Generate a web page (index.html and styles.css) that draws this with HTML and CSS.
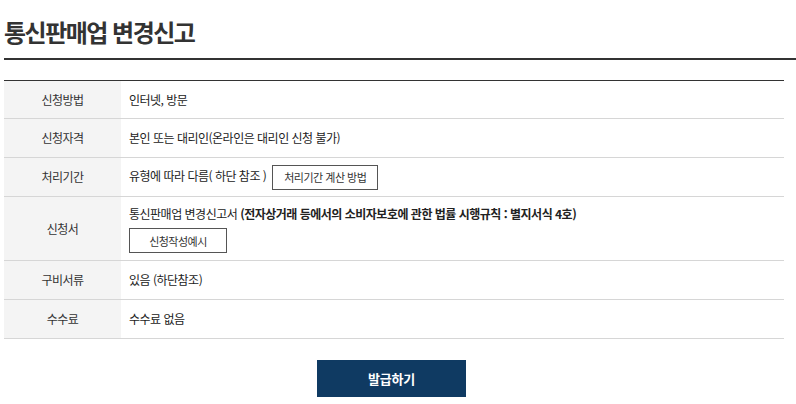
FILE: index.html
```html
<!DOCTYPE html>
<html lang="ko">
<head>
    <meta charset="UTF-8">
    <meta name="viewport" content="width=device-width, initial-scale=1.0">
    <title>통신판매업 변경신고</title>
    <link rel="stylesheet" href="styles.css">
</head>
<body>

    <div class="page">
        <h2 class="page-title">통신판매업 변경신고</h2>

        <!-- 신청 정보 -->
        <table class="info-table">
            <tr class="first">
                <th>신청방법</th>
                <td>인터넷, 방문</td>
            </tr>
            <tr>
                <th>신청자격</th>
                <td>본인 또는 대리인(온라인은 대리인 신청 불가)</td>
            </tr>
            <tr>
                <th>처리기간</th>
                <td>유형에 따라 다름( 하단 참조 ) <button class="line-btn">처리기간 계산 방법</button></td>
            </tr>
            <tr class="tall">
                <th>신청서</th>
                <td>
                    통신판매업 변경신고서 <strong>(전자상거래 등에서의 소비자보호에 관한 법률 시행규칙 : 별지서식 4호)</strong>
                    <div class="btn-row"><button class="line-btn wide">신청작성예시</button></div>
                </td>
            </tr>
            <tr>
                <th>구비서류</th>
                <td>있음 (하단참조)</td>
            </tr>
            <tr>
                <th>수수료</th>
                <td>수수료 없음</td>
            </tr>
        </table>

        <div class="actions">
            <button class="submit-btn">발급하기</button>
        </div>
    </div>

</body>
</html>
```

FILE: styles.css
```css
* {
    margin: 0;
    padding: 0;
    box-sizing: border-box;
}
body {
    font-family: "Noto Sans CJK KR", "Noto Sans", sans-serif;
    color: #333;
    background: #fff;
    overflow: hidden;
}
.page {
    padding: 0 0 0 4px;
}
.page-title {
    font-size: 24px;
    font-weight: bold;
    letter-spacing: -1.5px;
    line-height: 32px;
    padding-top: 16px;
    padding-bottom: 10px;
    border-bottom: 2px solid #333;
    margin-bottom: 20px;
}
.info-table {
    width: 780px;
    border-collapse: collapse;
    border-top: 1px solid #333;
    border-bottom: 1px solid #333;
    font-size: 12px;
    letter-spacing: -0.5px;
    color: #222;
}
.info-table th,
.info-table td {
    border-bottom: 1px solid #d6d6d6;
    height: 39px;
    padding: 6px 8px;
    line-height: 20px;
}
.info-table tr.first th,
.info-table tr.first td {
    height: 38px;
}
.info-table tr.tall th,
.info-table tr.tall td {
    padding: 7px 8px;
}
.info-table th {
    width: 117px;
    background: #f4f4f4;
    font-weight: normal;
    text-align: center;
    color: #333;
}
.info-table td {
    text-align: left;
}
.info-table strong {
    font-weight: bold;
}
.line-btn {
    font-family: inherit;
    font-size: 11px;
    letter-spacing: -0.5px;
    color: #333;
    background: #fff;
    border: 1px solid #555;
    height: 25px;
    padding: 0 11px;
    margin-left: 3px;
    vertical-align: middle;
    cursor: pointer;
}
.line-btn.wide {
    width: 98px;
    margin-left: 0;
}
.btn-row {
    margin-top: 4px;
}
.actions {
    width: 775px;
    display: flex;
    justify-content: center;
    padding-top: 21px;
}
.submit-btn {
    font-family: inherit;
    width: 149px;
    height: 37px;
    background: #0f3a62;
    color: #fff;
    border: none;
    font-size: 13px;
    font-weight: bold;
    letter-spacing: -0.2px;
    cursor: pointer;
}
```
